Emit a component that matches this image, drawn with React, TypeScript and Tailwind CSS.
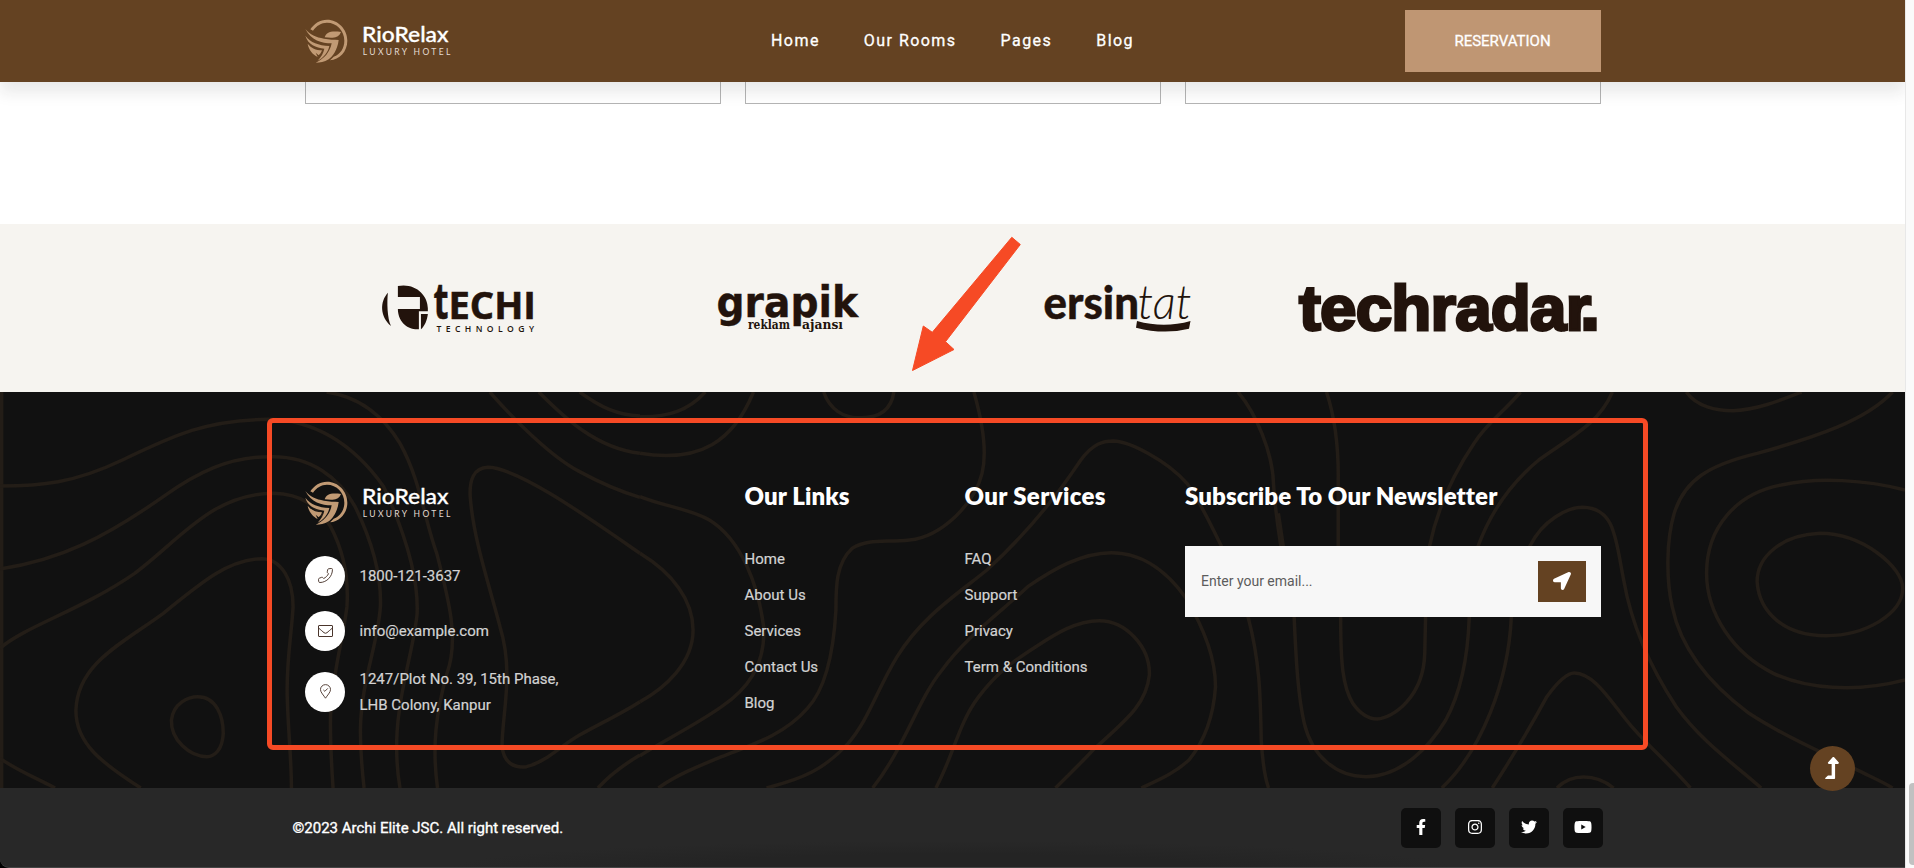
import React from "react";
import { FaFacebookF, FaInstagram, FaLevelUpAlt, FaLocationArrow, FaTwitter, FaYoutube } from "react-icons/fa";

const INK = "#22130c";

function RioLogo() {
  return (
    <svg className="block h-[46px] w-[148px] overflow-visible" viewBox="0 0 148 46" role="img" aria-label="RioRelax Luxury Hotel">
      <g transform="scale(.33333) translate(-75 -57)" fill="#c19a74">
        <path d="M91 88C103 70 120 59 141 59C175 59 202 88 202 122C202 155 178 179 150 181C154 177 158 173 161 170C181 163 193 144 193 122C193 92 170 68 141 68C124 68 109 77 99 92Z" />
        <path d="M134 112C139 98 150 92 183 96C179 107 170 113 158 113C149 114 142 112 134 112Z" />
        <path d="M76 87C90 105 108 112 132 116C148 119 162 119 176 120C173 148 158 170 146 178C133 186 120 188 107 188C134 176 150 156 155 130C125 130 93 121 76 87Z" />
        <path d="M76 107C92 128 115 136 148 138C144 158 130 174 113 182C124 170 130 160 133 146C108 143 84 134 76 107Z" />
        <path d="M83 131C94 145 107 150 126 151C124 158 120 163 116 166L107 158L113 171C98 164 86 149 83 131Z" />
      </g>
      <text x="57" y="23.3" textLength="86.5" lengthAdjust="spacingAndGlyphs" fill="#fff" stroke="#fff" strokeWidth=".3" className="font-['Lato',sans-serif] text-[21px] font-medium">RioRelax</text>
      <text x="57.8" y="36" textLength="87.5" fill="#e3dbd3" className="font-['Lato',sans-serif] text-[8.5px]">LUXURY HOTEL</text>
    </svg>
  );
}

function TechiLogo() {
  return (
    <svg className="h-[52px] w-[156px] overflow-visible" viewBox="380 282 156 52" fill={INK}>
      <g transform="translate(360 260) scale(.3444 .3333)">
        <path d="M81 98C57 125 58 170 90 198C79 175 78 125 81 98Z" />
        <path d="M110 78C160 68 197 105 197 145V154H171V208C135 210 110 182 110 147H174V111H110Z" />
        <path d="M177 162H197C195 180 188 198 177 208Z" />
      </g>
      <text x="433.5" y="319.3" textLength="15" lengthAdjust="spacingAndGlyphs" stroke={INK} strokeWidth=".6" className="font-['Open_Sans',sans-serif] text-[51px] font-bold">t</text>
      <text x="448.5" y="319.3" textLength="87.5" lengthAdjust="spacingAndGlyphs" stroke={INK} strokeWidth=".6" className="font-['Open_Sans',sans-serif] text-[38px] font-bold">ECHI</text>
      <text x="436.5" y="331.7" textLength="97.5" className="font-['Open_Sans',sans-serif] text-[8.6px] font-semibold">TECHNOLOGY</text>
    </svg>
  );
}

function GrapikLogo() {
  return (
    <svg className="h-[52px] w-[144px] overflow-visible" viewBox="716 282 144 52" fill={INK}>
      <text x="716.5" y="316.7" textLength="141.5" lengthAdjust="spacingAndGlyphs" stroke={INK} strokeWidth=".4" className="font-['DejaVu_Sans',sans-serif] text-[42px] font-bold">grapik</text>
      <text x="748" y="329.3" textLength="42" lengthAdjust="spacingAndGlyphs" className="font-['DejaVu_Serif',serif] text-[12px] font-bold">reklam</text>
      <text x="802" y="329.3" textLength="41" lengthAdjust="spacingAndGlyphs" className="font-['DejaVu_Serif',serif] text-[12px] font-bold">ajansı</text>
    </svg>
  );
}

function ErsintatLogo() {
  return (
    <svg className="h-[52px] w-[150px] overflow-visible" viewBox="1042 282 150 52" fill={INK}>
      <text x="1042.5" y="318.7" textLength="95.5" lengthAdjust="spacingAndGlyphs" stroke={INK} strokeWidth=".4" className="font-['Lato',sans-serif] text-[45px] font-black">ersin</text>
      <text x="1136.5" y="318.7" textLength="54" lengthAdjust="spacingAndGlyphs" className="font-['Lato',sans-serif] text-[47px] font-light italic">tat</text>
      <path d="M1136 321Q1163 328.500 1189.500 321L1188 328.700Q1163 335 1135 327.700Z" />
    </svg>
  );
}

function TechradarLogo() {
  return (
    <svg className="h-[52px] w-[304px] overflow-visible" viewBox="1296 282 304 52" fill={INK}>
      <text transform="translate(1299 330) scale(1.04 1)" textLength="281" lengthAdjust="spacing" stroke={INK} strokeWidth="2.8" className="font-['Liberation_Sans',sans-serif] text-[63px] font-bold">techradar</text>
      <text x="1579.5" y="330" stroke={INK} strokeWidth="2.6" className="font-['Liberation_Sans',sans-serif] text-[76px] font-bold">.</text>
    </svg>
  );
}

const leftLines = [
  "M4 36V1224",
  "M0 318C100 318 180 310 300 240C420 170 500 120 655 118C780 120 870 200 940 320C1000 480 1025 600 1022 700C1015 800 975 940 972 1080C971 1140 975 1190 980 1224",
  "M800 36C880 50 940 110 980 190C1030 300 1040 420 1070 520C1100 660 1125 780 1095 880C1068 1000 1058 1100 1072 1224",
  "M0 567C150 540 260 470 400 350C480 280 560 228 670 230C760 230 830 290 870 380C910 480 935 580 932 680C925 800 885 900 883 1050C883 1120 888 1180 892 1224",
  "M0 805C60 740 200 690 330 580C440 480 520 340 670 340C740 342 780 380 810 440C840 510 855 590 850 680C840 780 815 880 810 1000C808 1080 812 1150 816 1224",
  "M345 1224C250 1150 185 1090 186 990C190 850 300 790 400 700C500 600 560 540 640 536C690 536 718 600 718 680C715 760 700 850 704 960C706 1050 714 1140 714 1224",
  "M420 1020C425 970 460 950 485 950C530 950 547 1010 547 1060C545 1110 525 1130 507 1130C465 1130 418 1080 420 1020Z",
  "M0 1135C40 1170 90 1195 135 1224",
  "M1200 36C1260 120 1350 230 1420 275C1480 315 1520 335 1568 352",
  "M1568 1125C1520 1160 1490 1190 1465 1224",
  "M1320 36C1380 110 1460 205 1568 220",
  "M1420 36C1470 80 1510 105 1568 108",
  "M1568 520C1450 420 1270 262 1195 262C1160 264 1150 300 1152 350C1160 480 1200 620 1225 740C1260 880 1230 1000 1230 1100C1235 1150 1260 1165 1290 1160C1340 1145 1370 1100 1420 1065C1480 1025 1530 995 1568 965",
];

const middleLines = [
  "M0 350C60 380 120 385 170 420C250 480 290 620 303 740C308 860 260 930 200 980C130 1040 60 1080 0 1127",
  "M0 220C150 250 230 180 278 36",
  "M0 110C70 112 120 90 160 36",
  "M0 520C80 580 130 660 130 750C130 850 60 925 0 965",
  "M450 36C465 90 500 113 535 113C580 115 615 95 622 36",
  "M818 36C840 130 850 220 838 280C820 370 740 470 660 480C600 488 560 475 520 505C480 550 480 620 480 690C475 800 460 920 410 985C350 1070 260 1100 200 1130C140 1160 90 1185 45 1224",
  "M310 1224C400 1195 450 1170 510 1090C560 1020 580 930 630 830C690 710 780 640 850 570C930 480 1010 370 1080 240C1110 190 1135 183 1160 183C1200 185 1290 240 1340 310C1380 380 1400 440 1425 500L1490 712C1520 850 1520 960 1522 1080C1525 1140 1530 1190 1540 1224",
  "M570 1224C650 1100 680 960 740 870C800 770 880 700 950 620C1010 570 1080 518 1155 518C1240 518 1300 590 1335 650C1380 740 1410 830 1410 920C1405 1010 1385 1080 1345 1140C1310 1180 1270 1200 1228 1224",
  "M725 1224C770 1120 780 1030 830 950C880 870 920 840 970 800C1020 760 1070 722 1125 722C1190 722 1250 800 1248 885C1240 980 1180 1030 1110 1110C1080 1150 1045 1190 1018 1224",
  "M1465 36C1510 100 1550 220 1552 310C1556 390 1564 450 1570 498",
];

const rightLines = [
  "M-4 400L8 498L35 712C40 850 45 950 60 1030C80 1130 140 1190 212 1190C300 1190 370 1100 410 1020C450 930 465 820 468 712L490 498C520 400 570 310 640 240C720 170 790 130 822 36",
  "M115 36C135 110 145 200 144 300V498L150 712C150 850 155 920 180 970C200 1005 220 1017 240 1017C280 1015 355 950 358 820L360 712L370 498C390 380 430 280 480 190C510 130 550 100 595 36",
  "M400 1224C500 1110 565 900 572 712C580 600 600 540 618 498C650 420 710 382 750 382C830 385 830 480 850 600C870 740 920 870 980 980C1040 1080 1110 1140 1190 1224",
  "M525 1224C570 1140 620 1040 660 950C690 900 710 879 728 879C780 880 820 970 870 1040C920 1110 970 1160 1015 1224",
  "M685 1224C720 1180 780 1180 825 1224",
  "M1005 36C1030 80 1080 92 1120 92C1180 90 1240 60 1290 36",
  "M1515 36C1450 120 1330 170 1180 220C1060 255 1000 300 975 400C955 480 955 600 970 680C990 800 1060 910 1160 1000C1260 1080 1350 1120 1420 1165C1460 1190 1490 1205 1515 1224",
  "M1546 330C1450 300 1330 290 1240 315C1130 340 1055 440 1055 580C1055 700 1120 820 1220 880C1300 925 1420 940 1546 900",
  "M1335 460C1240 465 1180 530 1180 605C1185 700 1250 767 1350 767C1450 767 1540 700 1540 625C1540 560 1440 460 1335 460Z",
];

function Contours() {
  const draw = (lines: string[]) => lines.map((d) => <path key={d} d={d} vectorEffect="non-scaling-stroke" />);
  return (
    <svg className="absolute inset-0 h-[396px] w-[1905px]" viewBox="0 392 1905 396" fill="none" stroke="#231d17" strokeWidth="3.5" aria-hidden="true">
      <g transform="translate(0 380) scale(.40816 .33333)">{draw(leftLines)}</g>
      <g transform="translate(640 380) scale(.40816 .33333)">{draw(middleLines)}</g>
      <g transform="translate(1280 380) scale(.40434 .33333)">{draw(rightLines)}</g>
    </svg>
  );
}

const iconProps = { fill: "none", stroke: "#4a352c", strokeWidth: 1 } as const;

function PhoneIcon() {
  return (
    <svg className="size-[15px]" viewBox="0 0 16 16" {...iconProps} strokeLinejoin="round">
      <path d="M11.300 .8L14.300 .5Q15.300 .4 15.400 1.500C15.500 9 9.300 15.400 2 15.500Q1 15.500 .8 14.600L.5 12.200Q.4 11.400 1.200 11L3.900 9.900Q4.600 9.700 5.100 10.200L6 11.200C8.300 10.200 10.200 8.300 11.200 6L10.200 5.200Q9.700 4.700 9.900 4L10.400 1.500Q10.600 .9 11.300 .8Z" />
    </svg>
  );
}

function MailIcon() {
  return (
    <svg className="h-3 w-[15px]" viewBox="0 0 15 12" {...iconProps}>
      <rect x=".5" y=".5" width="14" height="11" rx=".5" />
      <path d="M.5 3C3 5 4.700 6.600 6 7.700Q7.500 8.800 9 7.700C10.300 6.600 12 5 14.500 3" />
    </svg>
  );
}

function PinIcon() {
  return (
    <svg className="h-[15px] w-[11px]" viewBox="0 0 12 16" {...iconProps}>
      <path d="M6 15.300C4.300 12.600 .5 8.800 .5 6A5.500 5.500 0 0 1 11.500 6C11.500 8.800 7.700 12.600 6 15.300Z" />
      <path d="M3.700 6.300L5.300 7.800L8.500 4.600" />
    </svg>
  );
}

function Contact({ icon, children }: { icon: React.ReactNode; children: React.ReactNode }) {
  return (
    <li className="flex items-center gap-[14.5px]">
      <span className="flex size-10 shrink-0 items-center justify-center rounded-full bg-white pb-px">{icon}</span>
      <span>{children}</span>
    </li>
  );
}

function Heading({ className, children }: { className: string; children: string }) {
  return (
    <h3 className={`font-['Lato',sans-serif] text-2xl leading-8 font-extrabold whitespace-nowrap text-white [-webkit-text-stroke:0] ${className}`}>{children}</h3>
  );
}

function LinkColumn({ title, links, tracking }: { title: string; links: string[]; tracking: string }) {
  return (
    <div className="w-[220px]">
      <Heading className={tracking}>{title}</Heading>
      <ul className="mt-[34px] flex flex-col gap-[10px]">
        {links.map((l) => (
          <li key={l}><a href="#">{l}</a></li>
        ))}
      </ul>
    </div>
  );
}

const socials = [
  { Icon: FaFacebookF, size: "size-4" },
  { Icon: FaInstagram, size: "size-4" },
  { Icon: FaTwitter, size: "size-4" },
  { Icon: FaYoutube, size: "size-[18px]" },
];

export default function App() {
  return (
    <div className="flex h-[868px] w-[1914px] overflow-hidden bg-[#fafafa] font-['Roboto',sans-serif]">
      <div className="relative flex w-[1905px] shrink-0 flex-col overflow-hidden bg-white">
        <header className="relative z-10 flex h-[82px] shrink-0 items-center bg-[#644222] pr-[304px] pl-[305px] shadow-[0_10px_15px_rgba(25,25,25,0.1)]">
          <div className="w-[466px] shrink-0 pt-[1px]"><RioLogo /></div>
          <nav className="flex flex-1 gap-[44px] text-base tracking-[1.45px] whitespace-nowrap text-white [-webkit-text-stroke:0.3px]">
            <a href="#">Home</a>
            <a href="#">Our Rooms</a>
            <a href="#">Pages</a>
            <a href="#">Blog</a>
          </nav>
          <a href="#" className="flex h-[62px] w-[196px] shrink-0 items-center justify-center bg-[#bf9673] pr-px text-[15px] text-white [-webkit-text-stroke:0.3px]">RESERVATION</a>
        </header>

        <div className="flex h-[142px] shrink-0 gap-6 pl-[305px]">
          <div className="h-[22px] w-[416px] border border-t-0 border-[#b4b4b4]" />
          <div className="h-[22px] w-[416px] border border-t-0 border-[#b4b4b4]" />
          <div className="h-[22px] w-[416px] border border-t-0 border-[#b4b4b4]" />
        </div>

        <section className="grid h-[168px] shrink-0 grid-cols-[repeat(4,330px)] items-center justify-items-center bg-[#f6f4f0] pl-[293px]">
          <TechiLogo />
          <GrapikLogo />
          <ErsintatLogo />
          <TechradarLogo />
        </section>

        <footer className="shrink-0 text-[15px] leading-[26px] text-[#d3d3d3]">
          <div className="relative h-[396px] bg-[#111]">
            <Contours />
            <div className="relative flex pt-[88px] pl-[305px] [-webkit-text-stroke:0.2px]">
              <div className="w-[439.5px]">
                <div className="pt-[1px] [-webkit-text-stroke:0]"><RioLogo /></div>
                <ul className="mt-[29px] flex flex-col gap-[15px]">
                  <Contact icon={<PhoneIcon />}>1800-121-3637</Contact>
                  <Contact icon={<MailIcon />}>info@example.com</Contact>
                  <Contact icon={<PinIcon />}>1247/Plot No. 39, 15th Phase,<br />LHB Colony, Kanpur</Contact>
                </ul>
              </div>
              <LinkColumn tracking="tracking-[0.1px]" title="Our Links" links={["Home", "About Us", "Services", "Contact Us", "Blog"]} />
              <LinkColumn tracking="tracking-[0.35px]" title="Our Services" links={["FAQ", "Support", "Privacy", "Term & Conditions"]} />
              <div className="ml-[0.5px] w-[416px]">
                <Heading className="tracking-[0.12px]">Subscribe To Our Newsletter</Heading>
                <form className="mt-[34px] flex h-[71px] items-center bg-[#f7f7f7] pr-[15px] pl-4">
                  <input className="min-w-0 flex-1 pb-[2px] text-sm outline-none [-webkit-text-stroke:0] placeholder:text-[#5c5c5c]" placeholder="Enter your email..." />
                  <button type="button" aria-label="Send" className="flex h-[41px] w-12 items-center justify-center bg-[#644222] pr-px pb-px text-white">
                    <FaLocationArrow className="size-[18px]" />
                  </button>
                </form>
              </div>
            </div>
          </div>
          <div className="bg-black">
            <div className="relative flex h-20 items-center justify-between rounded-bl-[9px] border-b border-[#454545] bg-[#282828] bg-[radial-gradient(ellipse_500px_26px_at_50%_100%,#242424_50%,#282828_100%)] pr-[302px] pl-[292.5px]">
              <p className="text-white [-webkit-text-stroke:0.35px]">©2023 Archi Elite JSC. All right reserved.</p>
              <div className="flex gap-[14px] text-white">
                {socials.map(({ Icon, size }, i) => (
                  <a key={i} href="#" className="flex size-10 items-center justify-center rounded-[5px] bg-[#0f0f0f] pb-[2px]"><Icon className={size} /></a>
                ))}
              </div>
            </div>
          </div>
        </footer>

        <div className="absolute top-[418px] left-[267px] h-[332px] w-[1381px] rounded-[6px] border-[5px] border-[#f64a25]" />
        <svg className="absolute top-[234px] left-[908px] h-[140px] w-[116px]" viewBox="908 234 116 140" fill="#f64a25" stroke="#f64a25" strokeWidth="1" strokeLinejoin="round">
          <path d="M1011.800 237.300L1020.300 244.500L945.500 341.700L954 349.500L912.500 370.500L923.300 326L932.300 332.300Z" />
        </svg>
        <button type="button" aria-label="Back to top" className="absolute top-[746px] left-[1810px] flex size-[45px] items-center justify-center rounded-full bg-[#644222] pr-px pb-[2px] text-white">
          <FaLevelUpAlt className="size-[22px]" />
        </button>
      </div>
      <div className="flex flex-1 flex-col items-end justify-end border-l border-[#e8e8e8] bg-[#fafafa] pb-[3px]">
        <div className="h-[82px] w-[5px] rounded-l-[4px] bg-[#c1c1c1]" />
      </div>
    </div>
  );
}
